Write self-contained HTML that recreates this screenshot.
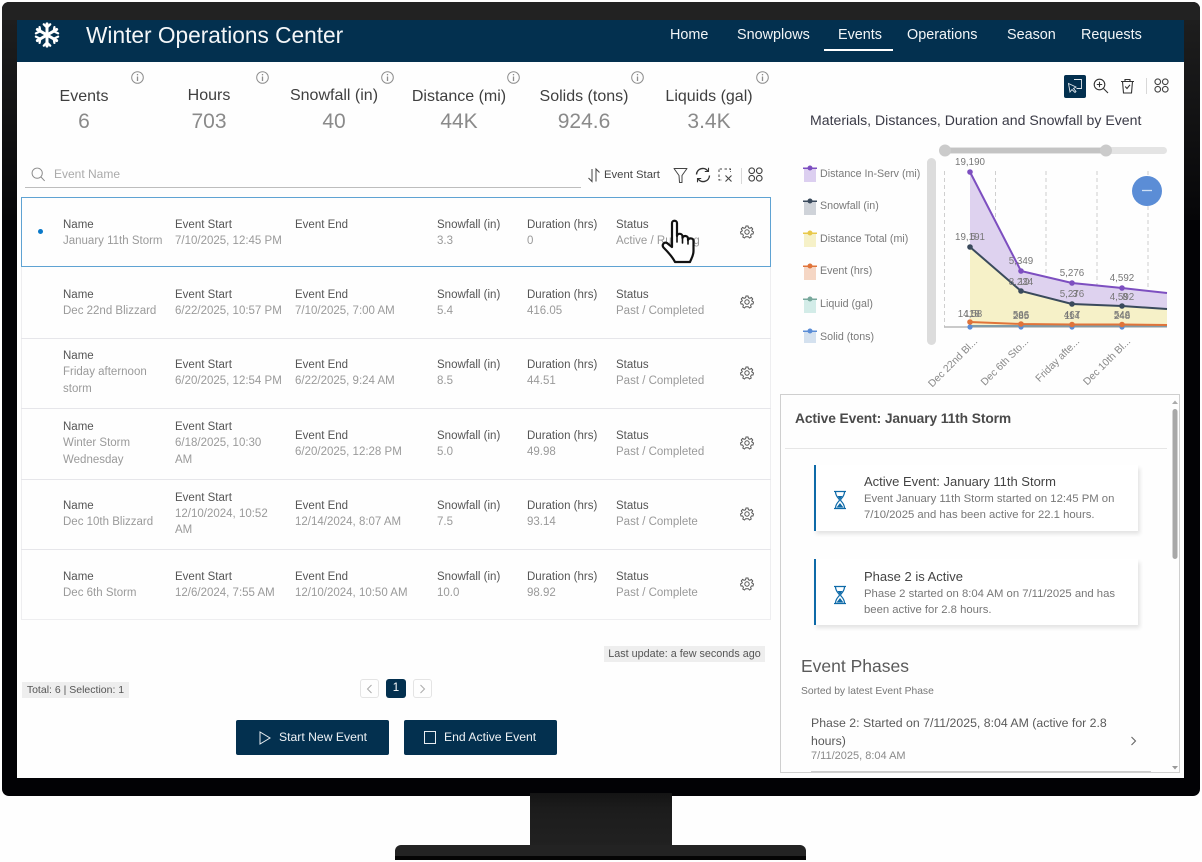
<!DOCTYPE html>
<html lang="en">
<head>
<meta charset="utf-8">
<title>Winter Operations Center</title>
<style>
html,body{margin:0;padding:0;background:#fefefe}
body{width:1202px;height:862px;position:relative;overflow:hidden;font-family:"Liberation Sans",sans-serif}
.a{position:absolute}
.l,.v{position:absolute;white-space:nowrap;font-size:11.5px;line-height:14px;height:14px;margin-top:1px}
.l{color:#555}
.v{color:#9a9a9a}
.h{position:absolute;height:1px;background:#e6e6ea}
.nav{position:absolute;top:27px;font-size:14.4px;line-height:16px;color:#f2f5f7;white-space:nowrap}
.kl{position:absolute;font-size:16px;line-height:20px;color:#3f3f3f;text-align:center;width:130px;white-space:nowrap;margin-top:1.500px}
.kv{position:absolute;font-size:21px;line-height:24px;color:#8a8a8a;text-align:center;width:130px;margin-top:1px}
.info{position:absolute;top:71px;width:13px;height:13px}
.gear{position:absolute;left:740px;width:14px;height:14px}
.leg{position:absolute;left:820px;font-size:10.700px;line-height:14px;color:#7a7a7a;white-space:nowrap}
svg{position:absolute;overflow:visible}
.card{position:absolute;left:814px;width:322px;height:66px;background:#fff;border-left:2px solid #0e6aa8;box-shadow:2px 3px 4px rgba(0,0,0,.11)}
.ct{position:absolute;left:864px;font-size:13px;line-height:16px;color:#444;white-space:nowrap}
.cb{position:absolute;left:864px;font-size:11.300px;line-height:16px;color:#777;white-space:nowrap}
.btn{position:absolute;top:720px;height:35px;background:#03304f;border-radius:2px;width:153px}
.btn span{position:absolute;top:10px;font-size:12.200px;line-height:14px;color:#eef2f5;white-space:nowrap}
</style>
</head>
<body>
<!-- monitor -->
<div class="a" style="left:2px;top:2px;width:1198px;height:794px;background:#020205;border-radius:7px"></div>
<div class="a" style="left:2px;top:2px;width:1198px;height:18px;background:#222;border-radius:7px 7px 0 0"></div>
<div class="a" style="left:2px;top:20px;width:15px;height:200px;background:linear-gradient(#1e1e1e,#060608)"></div>
<div class="a" style="left:1184px;top:20px;width:16px;height:200px;background:linear-gradient(#1e1e1e,#060608)"></div>
<div class="a" style="left:530px;top:793px;width:142px;height:53px;background:linear-gradient(#141414,#1c1c1c 30%,#212121)"></div>
<div class="a" style="left:395px;top:845px;width:411px;height:15px;background:#232323;border-radius:6px 6px 0 0"></div>
<div class="a" style="left:395px;top:856px;width:411px;height:4px;background:#050505"></div>

<!-- screen -->
<div class="a" style="left:17px;top:20px;width:1167px;height:758px;background:#fefefe"></div>
<div class="a" style="left:17px;top:20px;width:1167px;height:42px;background:#03304f"></div>

<svg style="left:34px;top:21px" width="26" height="28" viewBox="0 0 28 30" fill="none" stroke="#fff">
<g stroke-width="3.200" stroke-linecap="round">
<path d="M14 3V27M3.600 9 24.400 21M3.600 21 24.400 9"/>
</g>
<g stroke-width="2.400" stroke-linecap="round" stroke-linejoin="round">
<path d="M10.500 3.500 14 7l3.500-3.500M10.500 26.500 14 23l3.500 3.500"/>
<path d="M2 13.200 6.800 11 6 6.500M26 13.200 21.200 11 22 6.500M2 16.800 6.800 19 6 23.500M26 16.800 21.200 19 22 23.500"/>
</g>
</svg>
<div class="a" style="left:86px;top:22px;font-size:22.700px;line-height:26px;color:#f4f6f8;white-space:nowrap">Winter Operations Center</div>

<div class="nav" style="left:670px">Home</div>
<div class="nav" style="left:737px">Snowplows</div>
<div class="nav" style="left:838px">Events</div>
<div class="nav" style="left:907px">Operations</div>
<div class="nav" style="left:1007px">Season</div>
<div class="nav" style="left:1081px">Requests</div>
<div class="a" style="left:824px;top:49px;width:69px;height:2px;background:#fff"></div>

<!-- KPI -->
<div class="kl" style="left:19px;top:85px">Events</div><div class="kv" style="left:19px;top:109px">6</div>
<div class="kl" style="left:144px;top:84px">Hours</div><div class="kv" style="left:144px;top:109px">703</div>
<div class="kl" style="left:269px;top:84px">Snowfall (in)</div><div class="kv" style="left:269px;top:109px">40</div>
<div class="kl" style="left:394px;top:85px">Distance (mi)</div><div class="kv" style="left:394px;top:109px">44K</div>
<div class="kl" style="left:519px;top:85px">Solids (tons)</div><div class="kv" style="left:519px;top:109px">924.6</div>
<div class="kl" style="left:644px;top:85px">Liquids (gal)</div><div class="kv" style="left:644px;top:109px">3.4K</div>

<svg class="info" style="left:131px" viewBox="0 0 13 13" fill="none" stroke="#8d8d8d"><circle cx="6.500" cy="6.500" r="5.800"/><path d="M6.500 5.500V10" stroke-width="1.300"/><path d="M6.500 3V4.300" stroke-width="1.300"/></svg>
<svg class="info" style="left:256px" viewBox="0 0 13 13" fill="none" stroke="#8d8d8d"><circle cx="6.500" cy="6.500" r="5.800"/><path d="M6.500 5.500V10" stroke-width="1.300"/><path d="M6.500 3V4.300" stroke-width="1.300"/></svg>
<svg class="info" style="left:381px" viewBox="0 0 13 13" fill="none" stroke="#8d8d8d"><circle cx="6.500" cy="6.500" r="5.800"/><path d="M6.500 5.500V10" stroke-width="1.300"/><path d="M6.500 3V4.300" stroke-width="1.300"/></svg>
<svg class="info" style="left:507px" viewBox="0 0 13 13" fill="none" stroke="#8d8d8d"><circle cx="6.500" cy="6.500" r="5.800"/><path d="M6.500 5.500V10" stroke-width="1.300"/><path d="M6.500 3V4.300" stroke-width="1.300"/></svg>
<svg class="info" style="left:631px" viewBox="0 0 13 13" fill="none" stroke="#8d8d8d"><circle cx="6.500" cy="6.500" r="5.800"/><path d="M6.500 5.500V10" stroke-width="1.300"/><path d="M6.500 3V4.300" stroke-width="1.300"/></svg>
<svg class="info" style="left:756px" viewBox="0 0 13 13" fill="none" stroke="#8d8d8d"><circle cx="6.500" cy="6.500" r="5.800"/><path d="M6.500 5.500V10" stroke-width="1.300"/><path d="M6.500 3V4.300" stroke-width="1.300"/></svg>

<!-- search + tools -->
<svg style="left:31px;top:167px" width="15" height="15" viewBox="0 0 17 17" fill="none" stroke="#8a8a8a" stroke-width="1.100"><circle cx="7" cy="7" r="5.800"/><path d="M11.200 11.200 15.500 15.800"/></svg>
<div class="a" style="left:54px;top:167px;font-size:12px;line-height:14px;color:#aaa">Event Name</div>
<div class="a" style="left:25px;top:187px;width:556px;height:1px;background:#bdbdbd"></div>

<svg style="left:587px;top:167px" width="15" height="16" viewBox="0 0 15 16" fill="none" stroke="#444" stroke-width="1"><path d="M5 2V14.500L1.500 11M9 14.500V2L12.500 5.500"/></svg>
<div class="a" style="left:604px;top:168px;font-size:11.300px;line-height:14px;color:#444;white-space:nowrap">Event Start</div>
<svg style="left:673px;top:167px" width="15" height="17" viewBox="0 0 15 17" fill="none" stroke="#444" stroke-width="1" stroke-linejoin="round"><path d="M1 1.500H14L9 8.500V15.500H6.500L6 8.500Z"/></svg>
<svg style="left:695px;top:167px" width="16" height="16" viewBox="0 0 16 16" fill="none" stroke="#333" stroke-width="1.400"><path d="M1.500 7.500A6.300 6.300 0 0 1 13 4.200M14.500 8.500A6.300 6.300 0 0 1 3 11.800"/><path d="M13.500 .8V4.500H9.800M2.500 15.200V11.500H6.200" stroke-width="1.100"/></svg>
<svg style="left:718px;top:168px" width="15" height="15" viewBox="0 0 15 15" fill="none" stroke="#444" stroke-width="1"><path d="M1 4V1H4M6.500 1H9M11 1H12.500V4M1 6.500V9M1 11V12H4" stroke-dasharray="2.500 1.200"/><path d="M7.500 7.500 13.500 13.500M13.500 7.500 7.500 13.500" stroke-width="1.100"/></svg>
<div class="a" style="left:741px;top:168px;width:1px;height:16px;background:#d8d8d8"></div>
<svg style="left:748px;top:167px" width="15" height="15" viewBox="0 0 16 16" fill="none" stroke="#444" stroke-width="1.200"><circle cx="4" cy="4" r="3"/><circle cx="12" cy="4" r="3"/><circle cx="4" cy="12" r="3"/><circle cx="12" cy="12" r="3"/></svg>

<!-- list -->
<div class="a" style="left:21px;top:267px;width:750px;height:353px;border:1px solid #eeeef0;border-width:0 1px 1px;box-sizing:border-box"></div>
<div class="h" style="left:21px;width:750px;top:338px"></div>
<div class="h" style="left:21px;width:750px;top:408px"></div>
<div class="h" style="left:21px;width:750px;top:479px"></div>
<div class="h" style="left:21px;width:750px;top:549px"></div>
<div class="a" style="left:21px;top:197px;width:750px;height:70px;border:1px solid #5fa3d3;box-sizing:border-box"></div>
<div class="a" style="left:38px;top:229px;width:5px;height:5px;border-radius:50%;background:#0a79c9"></div>

<!-- row 1 -->
<div class="l" style="left:63px;top:217px">Name</div><div class="v" style="left:63px;top:233px">January 11th Storm</div>
<div class="l" style="left:175px;top:217px">Event Start</div><div class="v" style="left:175px;top:233px">7/10/2025, 12:45 PM</div>
<div class="l" style="left:295px;top:217px">Event End</div>
<div class="l" style="left:437px;top:217px">Snowfall (in)</div><div class="v" style="left:437px;top:233px">3.3</div>
<div class="l" style="left:527px;top:217px">Duration (hrs)</div><div class="v" style="left:527px;top:233px">0</div>
<div class="l" style="left:616px;top:217px">Status</div><div class="v" style="left:616px;top:233px">Active / Running</div>
<!-- row 2 -->
<div class="l" style="left:63px;top:287px">Name</div><div class="v" style="left:63px;top:303px">Dec 22nd Blizzard</div>
<div class="l" style="left:175px;top:287px">Event Start</div><div class="v" style="left:175px;top:303px">6/22/2025, 10:57 PM</div>
<div class="l" style="left:295px;top:287px">Event End</div><div class="v" style="left:295px;top:303px">7/10/2025, 7:00 AM</div>
<div class="l" style="left:437px;top:287px">Snowfall (in)</div><div class="v" style="left:437px;top:303px">5.4</div>
<div class="l" style="left:527px;top:287px">Duration (hrs)</div><div class="v" style="left:527px;top:303px">416.05</div>
<div class="l" style="left:616px;top:287px">Status</div><div class="v" style="left:616px;top:303px">Past / Completed</div>
<!-- row 3 -->
<div class="l" style="left:63px;top:348px">Name</div><div class="v" style="left:63px;top:364px">Friday afternoon</div><div class="v" style="left:63px;top:381px">storm</div>
<div class="l" style="left:175px;top:357px">Event Start</div><div class="v" style="left:175px;top:373px">6/20/2025, 12:54 PM</div>
<div class="l" style="left:295px;top:357px">Event End</div><div class="v" style="left:295px;top:373px">6/22/2025, 9:24 AM</div>
<div class="l" style="left:437px;top:357px">Snowfall (in)</div><div class="v" style="left:437px;top:373px">8.5</div>
<div class="l" style="left:527px;top:357px">Duration (hrs)</div><div class="v" style="left:527px;top:373px">44.51</div>
<div class="l" style="left:616px;top:357px">Status</div><div class="v" style="left:616px;top:373px">Past / Completed</div>
<!-- row 4 -->
<div class="l" style="left:63px;top:419px">Name</div><div class="v" style="left:63px;top:435px">Winter Storm</div><div class="v" style="left:63px;top:452px">Wednesday</div>
<div class="l" style="left:175px;top:419px">Event Start</div><div class="v" style="left:175px;top:435px">6/18/2025, 10:30</div><div class="v" style="left:175px;top:452px">AM</div>
<div class="l" style="left:295px;top:428px">Event End</div><div class="v" style="left:295px;top:444px">6/20/2025, 12:28 PM</div>
<div class="l" style="left:437px;top:428px">Snowfall (in)</div><div class="v" style="left:437px;top:444px">5.0</div>
<div class="l" style="left:527px;top:428px">Duration (hrs)</div><div class="v" style="left:527px;top:444px">49.98</div>
<div class="l" style="left:616px;top:428px">Status</div><div class="v" style="left:616px;top:444px">Past / Completed</div>
<!-- row 5 -->
<div class="l" style="left:63px;top:498px">Name</div><div class="v" style="left:63px;top:514px">Dec 10th Blizzard</div>
<div class="l" style="left:175px;top:490px">Event Start</div><div class="v" style="left:175px;top:506px">12/10/2024, 10:52</div><div class="v" style="left:175px;top:522px">AM</div>
<div class="l" style="left:295px;top:498px">Event End</div><div class="v" style="left:295px;top:514px">12/14/2024, 8:07 AM</div>
<div class="l" style="left:437px;top:498px">Snowfall (in)</div><div class="v" style="left:437px;top:514px">7.5</div>
<div class="l" style="left:527px;top:498px">Duration (hrs)</div><div class="v" style="left:527px;top:514px">93.14</div>
<div class="l" style="left:616px;top:498px">Status</div><div class="v" style="left:616px;top:514px">Past / Complete</div>
<!-- row 6 -->
<div class="l" style="left:63px;top:569px">Name</div><div class="v" style="left:63px;top:585px">Dec 6th Storm</div>
<div class="l" style="left:175px;top:569px">Event Start</div><div class="v" style="left:175px;top:585px">12/6/2024, 7:55 AM</div>
<div class="l" style="left:295px;top:569px">Event End</div><div class="v" style="left:295px;top:585px">12/10/2024, 10:50 AM</div>
<div class="l" style="left:437px;top:569px">Snowfall (in)</div><div class="v" style="left:437px;top:585px">10.0</div>
<div class="l" style="left:527px;top:569px">Duration (hrs)</div><div class="v" style="left:527px;top:585px">98.92</div>
<div class="l" style="left:616px;top:569px">Status</div><div class="v" style="left:616px;top:585px">Past / Complete</div>

<!-- gears -->
<svg class="gear" style="top:225px" viewBox="0 0 14 14" fill="none" stroke="#555" stroke-width="1"><circle cx="7" cy="7" r="2.200"/><path d="M6 1H8L8.400 2.700 9.900 3.300 11.400 2.400 12.700 4 11.700 5.400 12.100 6.200 13.500 7 13 9 11.400 9 10.600 10.400 11.200 12 9.500 13 8.300 11.700H5.700L4.500 13 2.800 12 3.400 10.400 2.600 9 1 9 .5 7 1.900 6.200 2.300 5.400 1.300 4 2.600 2.400 4.100 3.300 5.600 2.700Z"/></svg>
<svg class="gear" style="top:295px" viewBox="0 0 14 14" fill="none" stroke="#555" stroke-width="1"><circle cx="7" cy="7" r="2.200"/><path d="M6 1H8L8.400 2.700 9.900 3.300 11.400 2.400 12.700 4 11.700 5.400 12.100 6.200 13.500 7 13 9 11.400 9 10.600 10.400 11.200 12 9.500 13 8.300 11.700H5.700L4.500 13 2.800 12 3.400 10.400 2.600 9 1 9 .5 7 1.900 6.200 2.300 5.400 1.300 4 2.600 2.400 4.100 3.300 5.600 2.700Z"/></svg>
<svg class="gear" style="top:366px" viewBox="0 0 14 14" fill="none" stroke="#555" stroke-width="1"><circle cx="7" cy="7" r="2.200"/><path d="M6 1H8L8.400 2.700 9.900 3.300 11.400 2.400 12.700 4 11.700 5.400 12.100 6.200 13.500 7 13 9 11.400 9 10.600 10.400 11.200 12 9.500 13 8.300 11.700H5.700L4.500 13 2.800 12 3.400 10.400 2.600 9 1 9 .5 7 1.900 6.200 2.300 5.400 1.300 4 2.600 2.400 4.100 3.300 5.600 2.700Z"/></svg>
<svg class="gear" style="top:436px" viewBox="0 0 14 14" fill="none" stroke="#555" stroke-width="1"><circle cx="7" cy="7" r="2.200"/><path d="M6 1H8L8.400 2.700 9.900 3.300 11.400 2.400 12.700 4 11.700 5.400 12.100 6.200 13.500 7 13 9 11.400 9 10.600 10.400 11.200 12 9.500 13 8.300 11.700H5.700L4.500 13 2.800 12 3.400 10.400 2.600 9 1 9 .5 7 1.900 6.200 2.300 5.400 1.300 4 2.600 2.400 4.100 3.300 5.600 2.700Z"/></svg>
<svg class="gear" style="top:507px" viewBox="0 0 14 14" fill="none" stroke="#555" stroke-width="1"><circle cx="7" cy="7" r="2.200"/><path d="M6 1H8L8.400 2.700 9.900 3.300 11.400 2.400 12.700 4 11.700 5.400 12.100 6.200 13.500 7 13 9 11.400 9 10.600 10.400 11.200 12 9.500 13 8.300 11.700H5.700L4.500 13 2.800 12 3.400 10.400 2.600 9 1 9 .5 7 1.900 6.200 2.300 5.400 1.300 4 2.600 2.400 4.100 3.300 5.600 2.700Z"/></svg>
<svg class="gear" style="top:577px" viewBox="0 0 14 14" fill="none" stroke="#555" stroke-width="1"><circle cx="7" cy="7" r="2.200"/><path d="M6 1H8L8.400 2.700 9.900 3.300 11.400 2.400 12.700 4 11.700 5.400 12.100 6.200 13.500 7 13 9 11.400 9 10.600 10.400 11.200 12 9.500 13 8.300 11.700H5.700L4.500 13 2.800 12 3.400 10.400 2.600 9 1 9 .5 7 1.900 6.200 2.300 5.400 1.300 4 2.600 2.400 4.100 3.300 5.600 2.700Z"/></svg>

<!-- hand cursor -->
<svg style="left:660px;top:218px" width="38" height="46" viewBox="0 0 38 46">
<path d="M12 5C12 2 17 2 17 5V18C17 15 22.500 15 22.500 18.500V20C23 17 28 17.500 28 20.500V22C29 19.500 33.500 20 33.500 23V33C33.500 38 31 41 30 44H15C13 40 9 35 3.500 29.500 1.500 27 4 23.500 7 25L12 29Z" fill="#fff" stroke="#111" stroke-width="2.200" stroke-linejoin="round"/>
<path d="M17 18V24M22.500 19V25M28 21V26" fill="none" stroke="#111" stroke-width="1.600" stroke-linecap="round"/>
</svg>

<!-- footer left -->
<div class="a" style="left:604px;top:646px;width:161px;height:16px;background:#eeeeee;font-size:10.800px;line-height:16px;color:#555;text-align:center;white-space:nowrap">Last update: a few seconds ago</div>
<div class="a" style="left:22px;top:682px;width:107px;height:16px;background:#eeeeee;font-size:10.500px;line-height:16px;color:#555;text-align:center;white-space:nowrap">Total: 6 | Selection: 1</div>
<div class="a" style="left:360px;top:679px;width:19px;height:19px;border:1px solid #e4e4e4;border-radius:3px;box-sizing:border-box"></div>
<svg style="left:366px;top:684px" width="7" height="10" viewBox="0 0 7 10" fill="none" stroke="#aaa"><path d="M5.500 1 1.500 5 5.500 9"/></svg>
<div class="a" style="left:386px;top:679px;width:20px;height:19px;background:#03304f;border-radius:3px;color:#fff;font-size:11.500px;line-height:19px;text-align:center">1</div>
<div class="a" style="left:413px;top:679px;width:19px;height:19px;border:1px solid #e4e4e4;border-radius:3px;box-sizing:border-box"></div>
<svg style="left:419px;top:684px" width="7" height="10" viewBox="0 0 7 10" fill="none" stroke="#aaa"><path d="M1.500 1 5.500 5 1.500 9"/></svg>

<div class="btn" style="left:236px"><span style="left:43px">Start New Event</span></div>
<svg style="left:259px;top:731px" width="12" height="14" viewBox="0 0 12 14" fill="none" stroke="#e8edf1" stroke-width="1"><path d="M1 1V13L11 7Z"/></svg>
<div class="btn" style="left:404px"><span style="left:40px">End Active Event</span></div>
<div class="a" style="left:424px;top:731px;width:12px;height:13px;border:1px solid #e8edf1;box-sizing:border-box"></div>

<!-- chart toolbar -->
<div class="a" style="left:1064px;top:75px;width:22px;height:23px;background:#03304f;border-radius:2px"></div>
<svg style="left:1066px;top:77px" width="18" height="18" viewBox="0 0 18 18" fill="none" stroke="#dfe6ec" stroke-width=".9"><path d="M8 2.500H15.500V11.500H10.500"/><path d="M2.500 6.500 4 15 6 12.500 9 15.500 10 14.500 7.500 11.500 10 10Z"/></svg>
<svg style="left:1093px;top:78px" width="16" height="16" viewBox="0 0 16 16" fill="none" stroke="#333" stroke-width="1.100"><circle cx="6.500" cy="6.500" r="5.300"/><path d="M10.500 10.500 15 15M6.500 3.800V9.200M3.800 6.500H9.200"/></svg>
<svg style="left:1120px;top:78px" width="15" height="16" viewBox="0 0 15 16" fill="none" stroke="#333" stroke-width="1.100"><path d="M1 3.500H14M5 3.500V1.500H10V3.500M2.500 3.500 3.500 15H11.500L12.500 3.500"/><path d="M5.200 8.500 7 10.500 10 6.800"/></svg>
<div class="a" style="left:1146px;top:78px;width:1px;height:16px;background:#d8d8d8"></div>
<svg style="left:1154px;top:78px" width="15" height="15" viewBox="0 0 16 16" fill="none" stroke="#444" stroke-width="1.200"><circle cx="4" cy="4" r="3"/><circle cx="12" cy="4" r="3"/><circle cx="4" cy="12" r="3"/><circle cx="12" cy="12" r="3"/></svg>

<div class="a" style="left:810px;top:112px;font-size:14.100px;line-height:16px;color:#3a3a46;white-space:nowrap">Materials, Distances, Duration and Snowfall by Event</div>

<!-- legend -->
<svg style="left:802px;top:163px" width="16" height="180" viewBox="0 0 16 180">
<rect x="2" y="5" width="12" height="14" fill="#dccff0"/><rect x="1" y="4.500" width="14" height="1.500" fill="#7d4fc0"/><circle cx="8" cy="5" r="2.500" fill="#7d4fc0"/>
<rect x="2" y="38" width="12" height="14" fill="#cfd3d9"/><rect x="1" y="37.500" width="14" height="1.500" fill="#3a4a5c"/><circle cx="8" cy="38" r="2.500" fill="#3a4a5c"/>
<rect x="2" y="70" width="12" height="14" fill="#f6f1c8"/><rect x="1" y="69.500" width="14" height="1.500" fill="#e8c84a"/><circle cx="8" cy="70" r="2.500" fill="#e8c84a"/>
<rect x="2" y="103" width="12" height="14" fill="#f5d6c4"/><rect x="1" y="102.500" width="14" height="1.500" fill="#e0743a"/><circle cx="8" cy="103" r="2.500" fill="#e0743a"/>
<rect x="2" y="136" width="12" height="14" fill="#d3ece8"/><rect x="1" y="135.500" width="14" height="1.500" fill="#78a89c"/><circle cx="8" cy="136" r="2.500" fill="#78a89c"/>
<rect x="2" y="168" width="12" height="12" fill="#d4e1ef"/><rect x="1" y="167.500" width="14" height="1.500" fill="#5b8dd6"/><circle cx="8" cy="168" r="2.500" fill="#5b8dd6"/>
</svg>
<div class="leg" style="top:167px">Distance In-Serv (mi)</div>
<div class="leg" style="top:199px">Snowfall (in)</div>
<div class="leg" style="top:232px">Distance Total (mi)</div>
<div class="leg" style="top:264px">Event (hrs)</div>
<div class="leg" style="top:297px">Liquid (gal)</div>
<div class="leg" style="top:330px">Solid (tons)</div>

<!-- chart -->
<svg style="left:0;top:0" width="1202" height="862" viewBox="0 0 1202 862" font-family="Liberation Sans, sans-serif">
<rect x="927" y="158" width="9" height="187" rx="4.500" fill="#dcdcdc"/>
<rect x="940" y="147" width="227" height="7" rx="3.500" fill="#e4e4e4"/>
<rect x="945" y="148" width="161" height="5" fill="#c4c4c4"/>
<circle cx="945" cy="150.500" r="6" fill="#cbcbcb"/><circle cx="1106" cy="150.500" r="6" fill="#cbcbcb"/>
<g stroke="#cfcfcf" stroke-width="1" stroke-dasharray="4 3">
<path d="M944.500 171V327M995.500 171V327M1046 171V327M1097 171V327M1148 171V327"/>
</g>
<path d="M970 172 1021 271 1072 283 1122 288 1167 293V309L1122 306 1072 304 1021 291 970 247Z" fill="#ded2ef"/>
<path d="M970 247 1021 291 1072 304 1122 306 1167 309V327H970Z" fill="#f6f1c8"/>
<path d="M944 327H1167" stroke="#b9b9b9" stroke-width="1.500"/>
<path d="M970 326H1167" stroke="#7f9ba8" stroke-width="2"/>
<path d="M970 322 1021 324 1072 324.500 1122 324.500 1167 325" fill="none" stroke="#e0743a" stroke-width="2"/>
<path d="M970 172 1021 271 1072 283 1122 288 1167 293" fill="none" stroke="#7d4fc0" stroke-width="2"/>
<path d="M970 247 1021 291 1072 304 1122 306 1167 309" fill="none" stroke="#3a4a5c" stroke-width="2"/>
<g fill="#5b8dd6"><circle cx="970" cy="327" r="2.600"/><circle cx="1021" cy="327" r="2.600"/><circle cx="1072" cy="327" r="2.600"/><circle cx="1122" cy="327" r="2.600"/></g>
<g fill="#e0743a"><circle cx="970" cy="322" r="2.800"/><circle cx="1021" cy="324" r="2.800"/><circle cx="1072" cy="324.500" r="2.800"/><circle cx="1122" cy="324.500" r="2.800"/></g>
<g fill="#7d4fc0"><circle cx="970" cy="172" r="2.800"/><circle cx="1021" cy="271" r="2.800"/><circle cx="1072" cy="283" r="2.800"/><circle cx="1122" cy="288" r="2.800"/></g>
<g fill="#3a4a5c"><circle cx="970" cy="247" r="2.800"/><circle cx="1021" cy="291" r="2.800"/><circle cx="1072" cy="304" r="2.800"/><circle cx="1122" cy="306" r="2.800"/></g>
<g font-size="9.800" fill="#777" text-anchor="middle">
<text x="970" y="165">19,190</text>
<text x="970" y="240">19,191</text><text x="973" y="240">5</text>
<text x="1021" y="264">5,349</text>
<text x="1021" y="285">8,234</text><text x="1024" y="285">10</text>
<text x="1072" y="276">5,276</text>
<text x="1072" y="297">5,276</text><text x="1075" y="297">3</text>
<text x="1122" y="281">4,592</text>
<text x="1122" y="300">4,592</text><text x="1125" y="300">8</text>
<text x="970" y="317">14,58</text><text x="972" y="317">118</text>
<text x="1021" y="319">285</text><text x="1021" y="318">566</text>
<text x="1072" y="319">114</text><text x="1072" y="318">467</text>
<text x="1122" y="319">248</text><text x="1122" y="318">546</text>
</g>
<g font-size="10.300" fill="#888" text-anchor="end">
<text transform="translate(978 342) rotate(-45)">Dec 22nd Bl...</text>
<text transform="translate(1029 342) rotate(-45)">Dec 6th Sto...</text>
<text transform="translate(1080 342) rotate(-45)">Friday afte...</text>
<text transform="translate(1131 342) rotate(-45)">Dec 10th Bl...</text>
</g>
<circle cx="1147" cy="191" r="15" fill="#5b8dd6"/>
<path d="M1142 190.500H1152" stroke="#cfe0f5" stroke-width="1.300"/>
</svg>

<!-- right panel -->
<div class="a" style="left:780px;top:394px;width:400px;height:379px;border:1px solid #cfcfcf;box-sizing:border-box;background:#fefefe"></div>
<div class="a" style="left:795px;top:411px;font-size:13.800px;line-height:16px;font-weight:bold;color:#4a4a4a;white-space:nowrap;letter-spacing:-.1px">Active Event: January 11th Storm</div>
<div class="a" style="left:785px;top:448px;width:382px;height:1px;background:#e6e6e6"></div>

<svg style="left:1171px;top:399px" width="8" height="372" viewBox="0 0 8 372"><path d="M1 5 4 1.500 7 5Z" fill="#aaa"/><rect x="1.500" y="10" width="5" height="150" rx="2.500" fill="#a8a8a8"/><path d="M1 367 4 370.500 7 367Z" fill="#999"/></svg>

<div class="card" style="top:465px"></div>
<div class="card" style="top:559px"></div>
<svg style="left:833px;top:490px" width="14" height="20" viewBox="0 0 14 20" fill="none" stroke="#0e6aa8"><path d="M1 1.500H13M1 18.500H13M2.500 1.500C2.500 7 6 8 6.500 10 6 12 2.500 13 2.500 18.500M11.500 1.500C11.500 7 8 8 7.500 10 8 12 11.500 13 11.500 18.500" stroke-width="1.200"/><path d="M4.500 6H9.500L7 9.500ZM3.500 17.500 7 13 10.500 17.500Z" fill="#0e6aa8" stroke="none"/></svg>
<svg style="left:833px;top:585px" width="14" height="20" viewBox="0 0 14 20" fill="none" stroke="#0e6aa8"><path d="M1 1.500H13M1 18.500H13M2.500 1.500C2.500 7 6 8 6.500 10 6 12 2.500 13 2.500 18.500M11.500 1.500C11.500 7 8 8 7.500 10 8 12 11.500 13 11.500 18.500" stroke-width="1.200"/><path d="M4.500 6H9.500L7 9.500ZM3.500 17.500 7 13 10.500 17.500Z" fill="#0e6aa8" stroke="none"/></svg>

<div class="ct" style="top:474px">Active Event: January 11th Storm</div>
<div class="cb" style="top:491px">Event January 11th Storm started on 12:45 PM on</div>
<div class="cb" style="top:507px">7/10/2025 and has been active for 22.1 hours.</div>
<div class="ct" style="top:569px">Phase 2 is Active</div>
<div class="cb" style="top:586px">Phase 2 started on 8:04 AM on 7/11/2025 and has</div>
<div class="cb" style="top:602px">been active for 2.8 hours.</div>

<div class="a" style="left:801px;top:656px;font-size:17.500px;line-height:20px;color:#5a5a5a;white-space:nowrap">Event Phases</div>
<div class="a" style="left:801px;top:685px;font-size:10.300px;line-height:14px;color:#777;white-space:nowrap">Sorted by latest Event Phase</div>
<div class="a" style="left:811px;top:714px;font-size:12.300px;line-height:18px;color:#5a5a5a;white-space:nowrap">Phase 2: Started on 7/11/2025, 8:04 AM (active for 2.8</div>
<div class="a" style="left:811px;top:732px;font-size:12.300px;line-height:18px;color:#5a5a5a;white-space:nowrap">hours)</div>
<div class="a" style="left:811px;top:749px;font-size:11px;line-height:14px;color:#8a8a8a;white-space:nowrap">7/11/2025, 8:04 AM</div>
<svg style="left:1130px;top:736px" width="7" height="10" viewBox="0 0 7 10" fill="none" stroke="#666" stroke-width="1.100"><path d="M1.500 1 5.500 5 1.500 9"/></svg>
<div class="a" style="left:811px;top:771px;width:340px;height:1px;background:#ccc"></div>
</body>
</html>
